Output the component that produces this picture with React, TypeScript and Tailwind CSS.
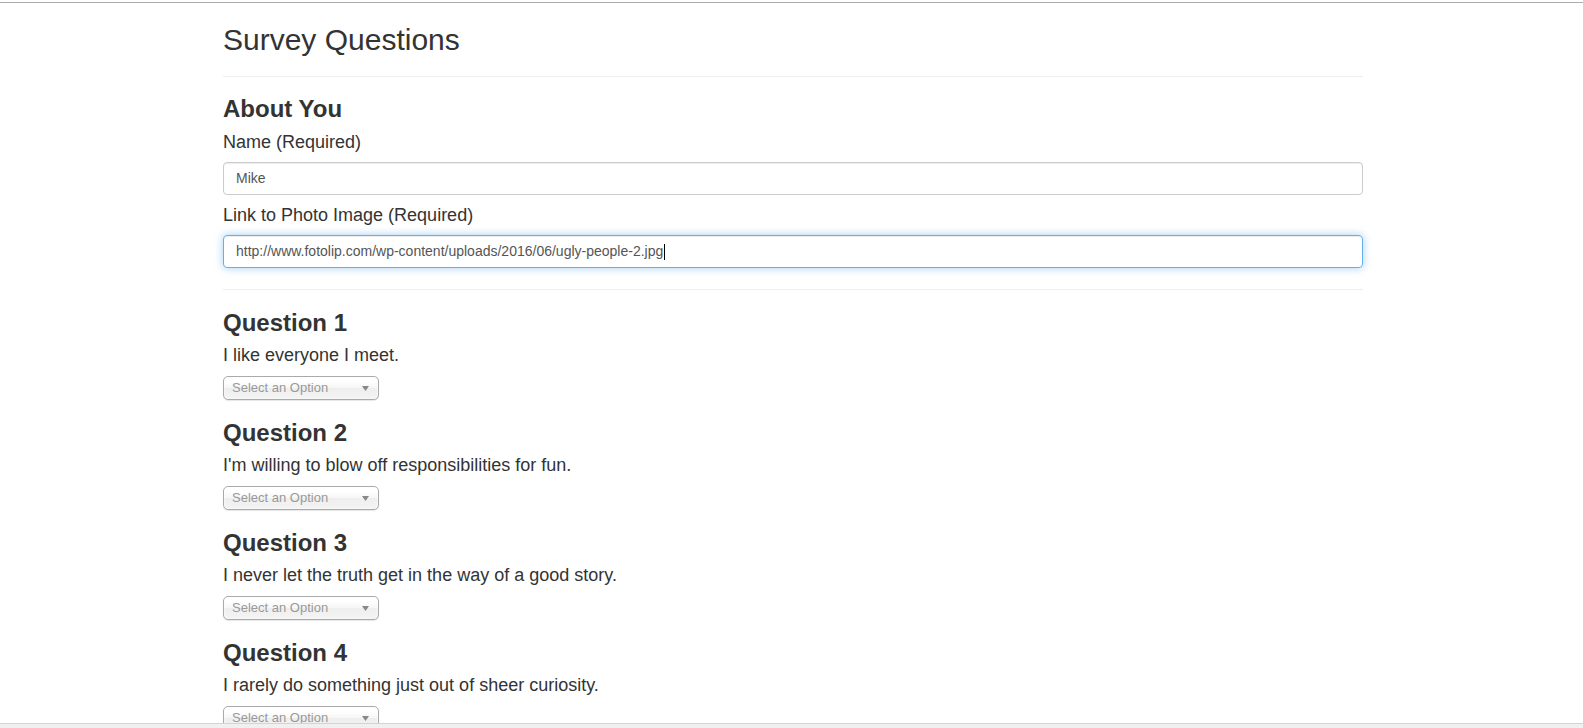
const QUESTIONS = [
  'I like everyone I meet.',
  "I'm willing to blow off responsibilities for fun.",
  'I never let the truth get in the way of a good story.',
  'I rarely do something just out of sheer curiosity.',
] as const

const FONT = "font-['Liberation_Sans',Arial,sans-serif]"

// chosen.js-style single select, closed, showing its placeholder
function ChosenSelect() {
  return (
    <div className="mt-[8px] flex h-[24px] w-[156px] items-center justify-between rounded-[5px] border border-[#aaa] bg-[linear-gradient(#fff_20%,#f6f6f6_50%,#eee_52%,#f4f4f4_100%)] pl-[8px] pr-[8px] shadow-[inset_0_0_3px_#fff,0_1px_1px_rgba(0,0,0,0.1)]">
      <span className="text-[13px] leading-[24px] text-[#999]">Select an Option</span>
      <svg width="7" height="5" viewBox="0 0 7 5" className="mr-[1px]" aria-hidden="true">
        <path d="M0 0h7L3.5 5z" fill="#888" />
      </svg>
    </div>
  )
}

function FieldBox({ value, focused }: { value: string; focused?: boolean }) {
  return (
    <div
      className={
        focused
          ? 'mt-[8px] flex h-[33px] items-center rounded-[4px] border border-[#66afe9] px-[12px] text-[14px] text-[#555] shadow-[inset_0_1px_1px_rgba(0,0,0,0.075),0_0_8px_rgba(102,175,233,0.6)]'
          : 'mt-[8px] flex h-[33px] items-center rounded-[4px] border border-[#ccc] px-[12px] text-[14px] text-[#555] shadow-[inset_0_1px_1px_rgba(0,0,0,0.075)]'
      }
    >
      <span>{value}</span>
      {focused && <span className="ml-px h-[16px] w-px bg-black" />}
    </div>
  )
}

export default function App() {
  return (
    <div className={`${FONT} min-h-screen bg-white text-[#333]`}>
      <div className="h-[2px] bg-white" />
      <div className="h-px bg-[#acacac]" />

      <div className="mx-auto w-[1143px] pb-[40px] pl-[3px]">
        <h1 className="mt-[20px] text-[30px] leading-[33px] font-normal">Survey Questions</h1>
        <hr className="mt-[20px] border-0 border-t border-[#eee]" />

        <h3 className="mt-[19px] text-[24px] leading-[26px] font-bold">About You</h3>
        <label className="mt-[8px] block text-[18px] leading-[24px]">Name (Required)</label>
        <FieldBox value="Mike" />
        <label className="mt-[8px] block text-[18px] leading-[24px]">Link to Photo Image (Required)</label>
        <FieldBox value="http://www.fotolip.com/wp-content/uploads/2016/06/ugly-people-2.jpg" focused />

        <hr className="mt-[21px] border-0 border-t border-[#eee]" />

        <div className="mt-[20px]">
          {QUESTIONS.map((text, i) => (
            <div key={i} className="pb-[20px]">
              <h3 className="text-[24px] leading-[26px] font-bold">Question {i + 1}</h3>
              <p className="mt-[6px] text-[18px] leading-[26px]">{text}</p>
              <ChosenSelect />
            </div>
          ))}
        </div>
      </div>

      <div className="fixed inset-x-0 bottom-0 h-[5px] border-t border-[#d4d4d4] bg-[#f0f0f0]" />
    </div>
  )
}
